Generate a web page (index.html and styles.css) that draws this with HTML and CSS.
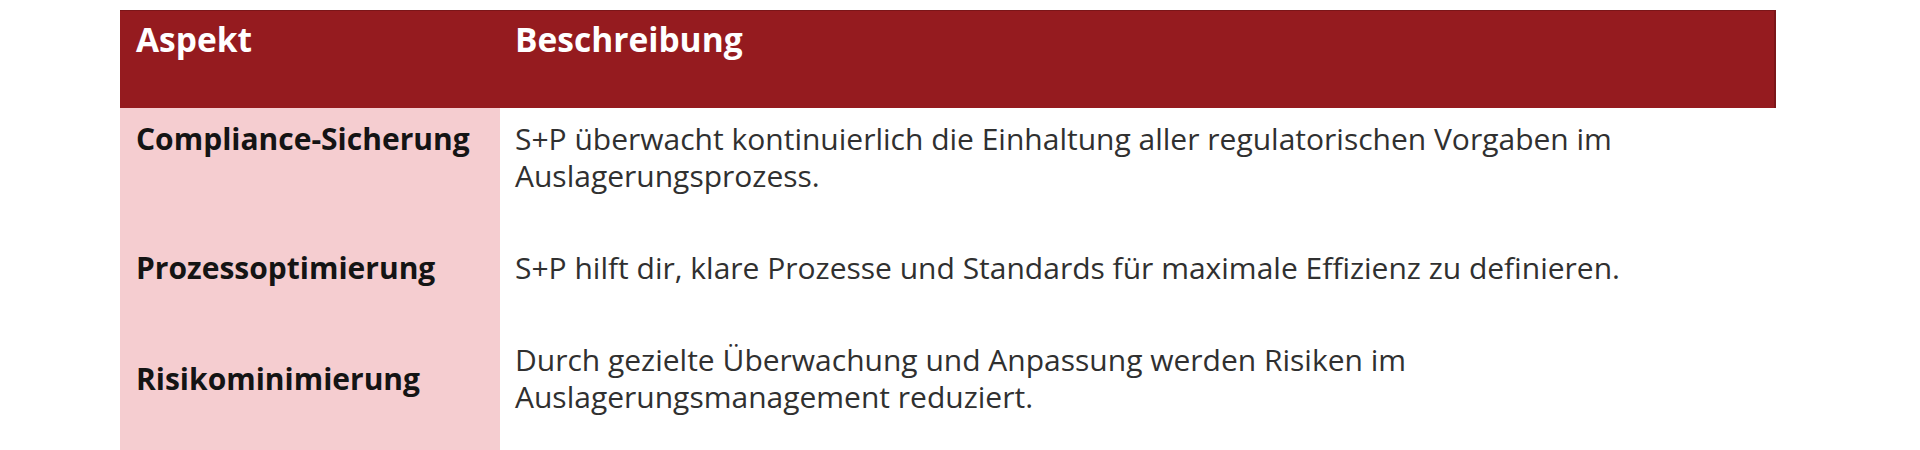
FILE: index.html
```html
<!DOCTYPE html>
<html lang="de">
<head>
<meta charset="utf-8">
<title>Aspekt / Beschreibung</title>
<link rel="stylesheet" href="styles.css">
</head>
<body>
<div class="table">
  <div class="head head-label">Aspekt</div>
  <div class="head head-desc">Beschreibung</div>

  <div class="cell label">Compliance-Sicherung</div>
  <div class="cell desc">S+P überwacht kontinuierlich die Einhaltung aller regulatorischen Vorgaben im Auslagerungsprozess.</div>

  <div class="cell label">Prozessoptimierung</div>
  <div class="cell desc">S+P hilft dir, klare Prozesse und Standards für maximale Effizienz zu definieren.</div>

  <div class="cell label label-center">Risikominimierung</div>
  <div class="cell desc">Durch gezielte Überwachung und Anpassung werden Risiken im Auslagerungsmanagement reduziert.</div>
</div>
</body>
</html>
```

FILE: styles.css
```css
html, body {
  margin: 0;
  padding: 0;
  background: #ffffff;
}

body {
  font-family: "Open Sans", "Noto Sans", "Liberation Sans", sans-serif;
  height: 450px;
  overflow: hidden;
}

.table {
  display: grid;
  grid-template-columns: 380px 1fr;
  width: 1656px;
  margin: 10px 0 0 120px;
}

.head {
  background: #951b1f;
  color: #ffffff;
  font-weight: 700;
  font-size: 33.5px;
  line-height: 36px;
  padding: 10px 16px 51px;
  border-top: 1px solid #7b1619;
}

.head-label {
  padding-left: 16px;
}

.head-desc {
  padding-left: 15px;
  border-right: 2px solid #7b1619;
}

.cell {
  font-size: 30px;
  line-height: 37px;
  padding: 12px 16px 43px;
}

.label {
  background: #f5cdd0;
  color: #141414;
  font-weight: 700;
}

.label-center {
  display: flex;
  align-items: center;
}

.desc {
  background: #ffffff;
  color: #303030;
  padding-left: 15px;
  padding-right: 16px;
}
```
